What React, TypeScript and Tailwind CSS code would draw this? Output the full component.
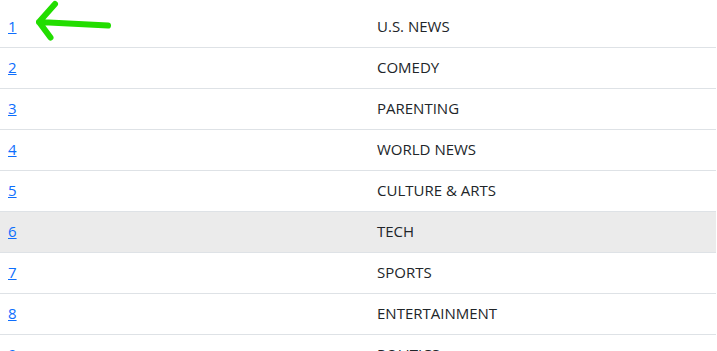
const rows = [
  "U.S. NEWS",
  "COMEDY",
  "PARENTING",
  "WORLD NEWS",
  "CULTURE & ARTS",
  "TECH",
  "SPORTS",
  "ENTERTAINMENT",
  "POLITICS",
];

export default function App() {
  return (
    <div className="relative h-[351px] w-[717px] overflow-hidden bg-white pt-[6px] font-['Open_Sans',sans-serif] text-[15px] text-[#212529]">
      <table className="w-[716px] border-collapse">
        <tbody>
          {rows.map((label, i) => (
            <tr
              key={label}
              className={`border-b border-[#dee2e6] ${i === 5 ? "bg-[#ebebeb]" : ""}`}
            >
              <td className="h-[41px] w-[369px] px-2 py-0 align-middle">
                <a href="#" className="text-[#0d6efd] underline">
                  {i + 1}
                </a>
              </td>
              <td className="h-[41px] px-2 py-0 align-middle">{label}</td>
            </tr>
          ))}
        </tbody>
      </table>

      {/* hand-drawn pointer */}
      <svg
        className="pointer-events-none absolute left-0 top-0"
        width="120"
        height="45"
        viewBox="0 0 120 45"
        fill="none"
      >
        <path
          d="M55 4 L39 22 L50.5 37.5 M39 22 Q60 23 108 25.5"
          stroke="#22dd00"
          strokeWidth="6"
          strokeLinecap="round"
          strokeLinejoin="round"
        />
      </svg>
    </div>
  );
}
